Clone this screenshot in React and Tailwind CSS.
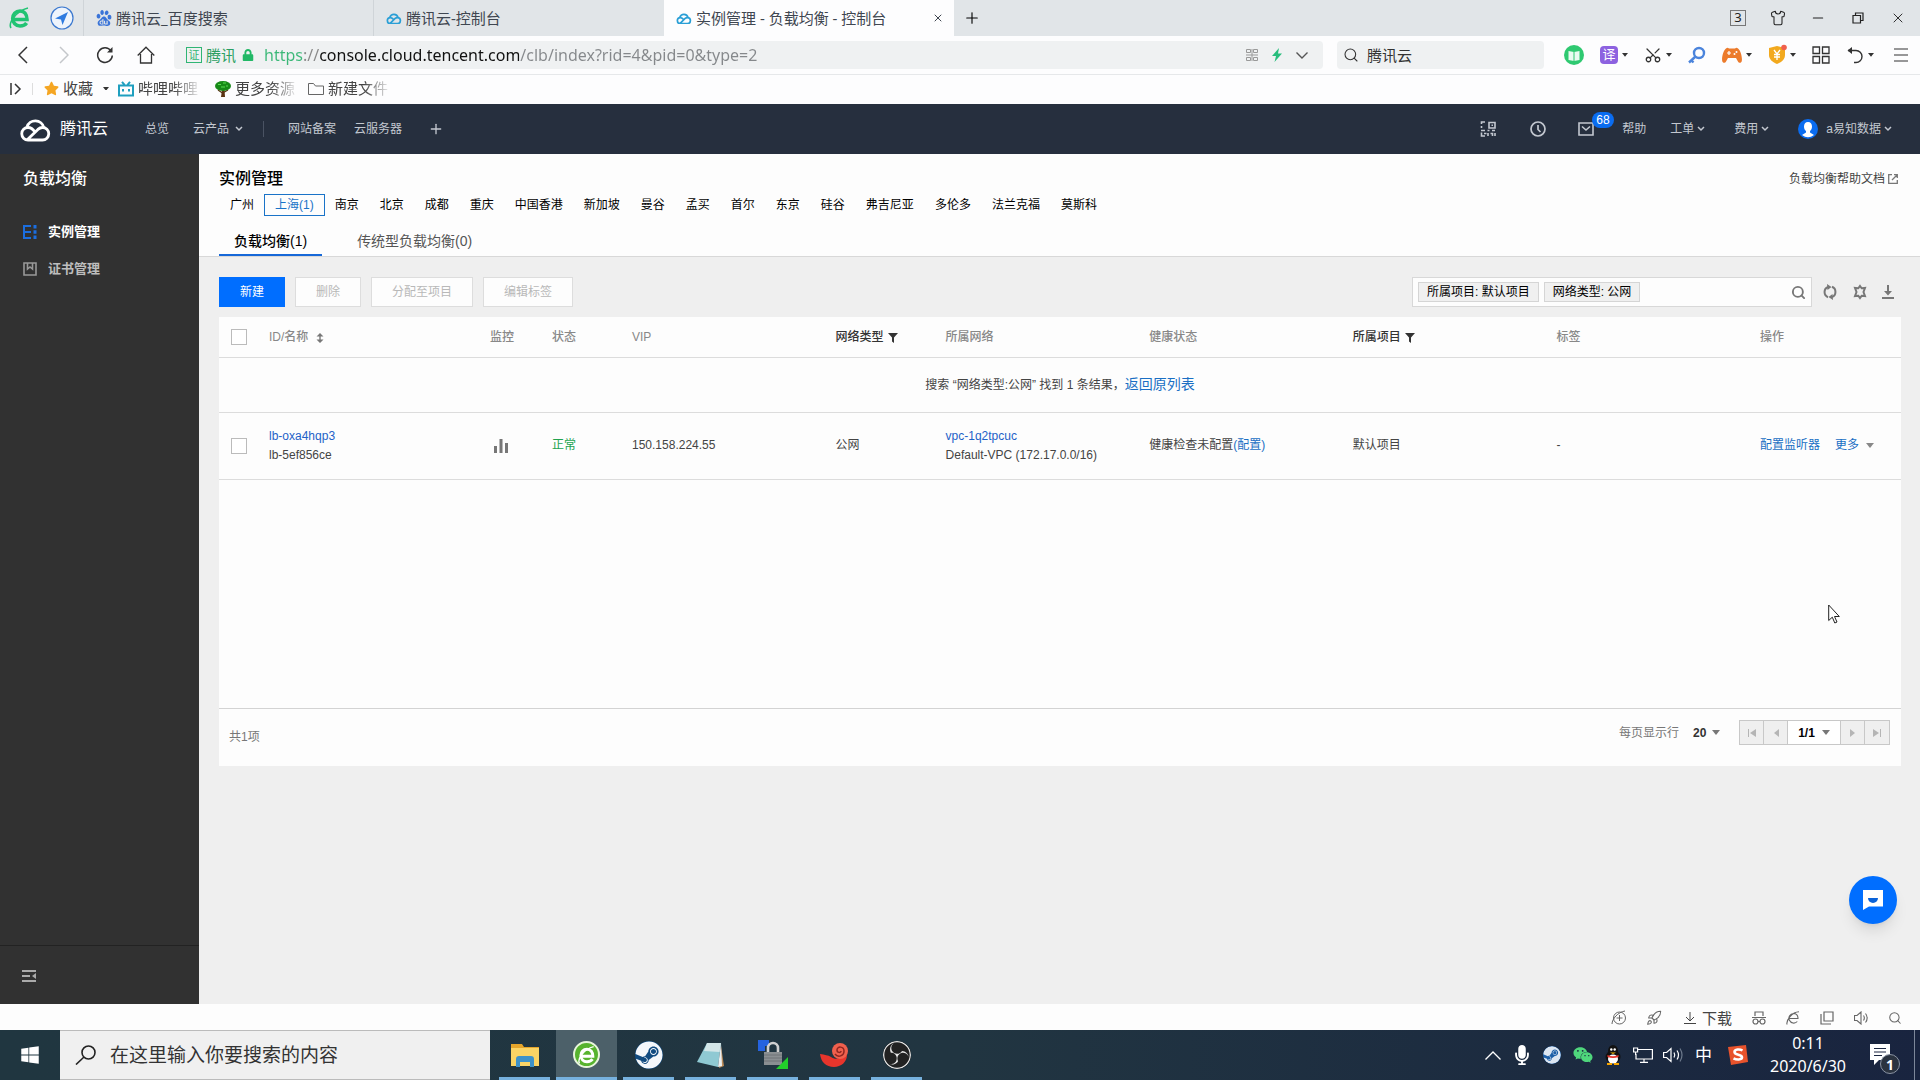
import { Scissors, Plus, X, Minus, Search, Shirt, Rocket } from "lucide-react";
import { FaSteam, FaWindows, FaWeixin, FaStar, FaLock, FaMicrophone } from "react-icons/fa";
import { SiBaidu, SiObsstudio } from "react-icons/si";

const regions = [
  "广州", "上海(1)", "南京", "北京", "成都", "重庆", "中国香港", "新加坡", "曼谷", "孟买",
  "首尔", "东京", "硅谷", "弗吉尼亚", "多伦多", "法兰克福", "莫斯科",
];

function CloudLogo({ className, stroke = "currentColor", width = 3 }) {
  return (
    <svg className={className} viewBox="0 0 33 26" fill="none" stroke={stroke} strokeWidth={width}>
      <path d="M16 16c-2-3-4-4.500-7-4.500a6.200 6.200 0 0 0 0 12.500h14.500a6.200 6.200 0 0 0 0-12.500c-2 0-3.400.8-4.600 1.900L8.500 23.500" />
      <path d="M8 11a8.700 8.700 0 0 1 16.800.5" />
    </svg>
  );
}

function EdgeE({ className, color }) {
  return (
    <svg className={className} viewBox="0 0 24 24" fill="none" stroke={color}>
      <path d="M5 13.500h14c0-5-2.600-8.500-7-8.500s-7.300 3.300-7.300 7.500S7.700 20 12 20c3 0 5.200-1 6.600-3" strokeWidth="3.600" />
      <path d="M3 22c-3-5 5-17 17-20" strokeWidth="1.600" />
    </svg>
  );
}

function Caret({ className = "w-1.5" }) {
  return (
    <svg className={className} viewBox="0 0 8 5" fill="currentColor">
      <path d="M0 0h8L4 5z" />
    </svg>
  );
}

function Chevron({ className = "w-2" }) {
  return (
    <svg className={className} viewBox="0 0 8 6" fill="none" stroke="currentColor" strokeWidth="1.500">
      <path d="M1 1l3 3 3-3" />
    </svg>
  );
}

function GridIcon({ className }) {
  return (
    <svg className={className} viewBox="0 0 18 18" fill="none" stroke="currentColor" strokeWidth="1.300">
      <path d="M1 1h6.500v6.500H1zM10.500 1H17v6.500h-6.500zM1 10.500h6.500V17H1zM10.500 10.500H17V17h-6.500z" />
    </svg>
  );
}

function TabStrip() {
  return (
    <div className="flex h-9 items-stretch bg-[#e1e5e8] text-[15px] text-[#3f4650]">
      <div className="flex w-10 items-center justify-center">
        <EdgeE className="h-6 w-6" color="#22c373" />
      </div>
      <div className="flex w-11 items-center justify-center border-r border-[#cfd4d8]">
        <svg className="h-6 w-6" viewBox="0 0 24 24">
          <circle cx="12" cy="12" r="11" fill="#eef4fc" stroke="#3b78cf" strokeWidth="1.200" />
          <path d="M18 6L5 12.500l6 1 1.500 5.500z" fill="#2f7be0" />
        </svg>
      </div>
      <button className="flex w-[290px] items-center gap-1 border-r border-[#cfd4d8] pl-3 text-left">
        <SiBaidu className="size-4 text-[#3a74d8]" />
        腾讯云_百度搜索
      </button>
      <button className="flex w-[290px] items-center gap-1 pl-3 text-left">
        <CloudLogo className="w-4" stroke="#2a9fd6" width={3.5} />
        腾讯云-控制台
      </button>
      <div className="flex w-[290px] items-center gap-1 bg-[#fdfdfe] pr-2.5 pl-3">
        <CloudLogo className="w-4" stroke="#2a9fd6" width={3.5} />
        <span className="flex-1">实例管理 - 负载均衡 - 控制台</span>
        <button aria-label="关闭标签页"><X className="size-3" strokeWidth={2} /></button>
      </div>
      <button className="flex w-9 items-center justify-center text-black" aria-label="新标签页">
        <Plus className="size-[18px]" strokeWidth={1.5} />
      </button>
      <div className="ml-auto flex items-stretch pr-0.5 text-[#222]">
        <button className="flex w-10 items-center justify-center">
          <span className="flex h-4 w-4 items-center justify-center border border-[#777] text-[13px]">3</span>
        </button>
        <button className="flex w-10 items-center justify-center" aria-label="皮肤"><Shirt className="size-4" strokeWidth={1.6} /></button>
        <button className="flex w-10 items-center justify-center" aria-label="最小化"><Minus className="size-4" strokeWidth={1.6} /></button>
        <button className="flex w-10 items-center justify-center" aria-label="还原">
          <svg className="size-3" viewBox="0 0 12 12" fill="none" stroke="currentColor" strokeWidth="1.200">
            <path d="M1 3.500h7.500V11H1zM3.500 3.500V1H11v7.500H8.500" />
          </svg>
        </button>
        <button className="flex w-10 items-center justify-center" aria-label="关闭"><X className="size-4" strokeWidth={1.4} /></button>
      </div>
    </div>
  );
}

function AddressRow() {
  return (
    <div className="flex h-[39px] items-center border-b border-[#e6e8ea] bg-[#fdfdfe] pr-3 text-[#333]">
      <div className="flex pl-0.5">
        <button className="flex w-[41px] justify-center" aria-label="后退">
          <svg className="h-[18px]" viewBox="0 0 10 18" fill="none" stroke="currentColor" strokeWidth="1.500"><path d="M9 1L1 9l8 8" /></svg>
        </button>
        <button className="flex w-[41px] justify-center text-[#c4c7ca]" aria-label="前进">
          <svg className="h-[18px]" viewBox="0 0 10 18" fill="none" stroke="currentColor" strokeWidth="1.500"><path d="M1 1l8 8-8 8" /></svg>
        </button>
        <button className="flex w-[41px] justify-center" aria-label="刷新">
          <svg className="size-[18px]" viewBox="0 0 18 18" fill="none" stroke="currentColor" strokeWidth="1.500">
            <path d="M15 5A7.300 7.300 0 1 0 16.300 9.500" />
            <path d="M16.500 1v5.500H11z" fill="currentColor" stroke="none" />
          </svg>
        </button>
        <button className="flex w-[41px] justify-center" aria-label="主页">
          <svg className="size-[18px]" viewBox="0 0 18 18" fill="none" stroke="currentColor" strokeWidth="1.300">
            <path d="M.7 9.500L9 1.200l8.300 8.300M3.500 8v9h11V8" />
          </svg>
        </button>
      </div>

      <div className="ml-2 flex h-7 flex-1 items-center rounded bg-[#eff1f2] pr-[15px] pl-3">
        <span className="flex h-4 w-4 items-center justify-center border border-[#2fb574] text-[11px] text-[#2fb574]">证</span>
        <span className="ml-1 text-[15px] text-[#2b9f63]">腾讯</span>
        <FaLock className="ml-1.5 size-3 text-[#22b866]" />
        <input
          aria-label="地址栏"
          defaultValue="https://console.cloud.tencent.com/clb/index?rid=4&pid=0&type=2"
          className="ml-2.5 min-w-0 flex-1 bg-[linear-gradient(90deg,#3bb878_39px,#888_39px,#888_55px,#111_55px,#111_255px,#85888b_255px)] bg-clip-text text-[16px] text-transparent outline-none"
        />
        <svg className="size-3 text-[#999]" viewBox="0 0 12 12" fill="none" stroke="currentColor">
          <path d="M.5.5h4v3h-4zM7.500.5h4v3h-4zM.5 8.500h4v3h-4zM7.500 8.500h4v3h-4zM0 6h12M6 0v12" />
        </svg>
        <svg className="ml-3.5 h-3.5 w-2.5" viewBox="0 0 10 14"><path d="M7 0L0 8h4l-1.500 6L10 5.500H6z" fill="#27bd7c" /></svg>
        <svg className="ml-3.5 w-3" viewBox="0 0 12 7" fill="none" stroke="#555" strokeWidth="1.400"><path d="M.5.5L6 6l5.500-5.500" /></svg>
      </div>

      <label className="ml-3.5 flex h-7 w-[207px] items-center gap-2 rounded bg-[#eff1f2] pl-1.5">
        <Search className="size-4" strokeWidth={1.6} />
        <input aria-label="搜索" defaultValue="腾讯云" className="w-40 text-[15px] outline-none" />
      </label>

      <div className="ml-5 flex items-center gap-4">
        <button aria-label="阅读">
          <svg className="size-5" viewBox="0 0 20 20">
            <circle cx="10" cy="10" r="10" fill="#2fc971" />
            <path d="M4.500 6l5.500 1 5.500-1v9L10 16l-5.500-1z" fill="#e9fbf1" />
            <path d="M10 7v9" stroke="#2fc971" />
          </svg>
        </button>
        <button className="flex items-center gap-1">
          <span className="flex size-[18px] items-center justify-center rounded-sm bg-[#8d62e0] text-[13px] text-white">译</span>
          <Caret />
        </button>
        <button className="flex items-center gap-1" aria-label="截图">
          <Scissors className="size-[18px] -rotate-90" strokeWidth={1.7} />
          <Caret />
        </button>
        <button aria-label="密码">
          <svg className="size-[18px]" viewBox="0 0 18 18" fill="none" stroke="#4b84dc" strokeWidth="2.400">
            <circle cx="11" cy="7" r="5" />
            <path d="M7.500 10.500L1 16.500M3 14l2.500 2.500" />
          </svg>
        </button>
        <button className="flex items-center gap-1" aria-label="游戏">
          <svg className="h-4 w-5" viewBox="0 0 20 16">
            <path d="M4 1.500q1.500-1.500 3 0h6q1.500-1.500 3 0c2.500 1.500 4.500 9 3.800 12.500-.5 2.500-3 2.200-4 .2L14 11H6l-1.800 3.200c-1 2-3.500 2.300-4-.2C-.5 10.500 1.500 3 4 1.500z" fill="#ec7b2c" />
            <path d="M7 4v4M5 6h4" stroke="#fff" strokeWidth="1.200" />
            <circle cx="12.500" cy="7" r="1" fill="#fff" />
            <circle cx="14.500" cy="5" r="1" fill="#fff" />
          </svg>
          <Caret />
        </button>
        <button className="flex items-center gap-1" aria-label="安全">
          <svg className="size-[18px] overflow-visible" viewBox="0 0 18 18">
            <path d="M9 0l8 2v7c0 4-3 7-8 9-5-2-8-5-8-9V2z" fill="#f2a91e" />
            <path d="M6 4l3 4 3-4M9 8v6M6 8.500h6M6 11h6" stroke="#fff" strokeWidth="1.300" fill="none" />
            <circle cx="16" cy="1.500" r="2.800" fill="#f0604d" />
          </svg>
          <Caret />
        </button>
        <button aria-label="扩展"><GridIcon className="size-[18px]" /></button>
        <button className="flex items-center gap-1" aria-label="恢复">
          <svg className="size-[18px]" viewBox="0 0 18 18" fill="none" stroke="currentColor" strokeWidth="1.400">
            <path d="M2 4.500h8a5.500 5.500 0 0 1 0 12H8" />
            <path d="M6 1L1.500 4.500 6 8z" fill="currentColor" stroke="none" />
          </svg>
          <Caret />
        </button>
        <button className="pl-1" aria-label="菜单">
          <svg className="size-3.5" viewBox="0 0 14 14" stroke="currentColor" strokeWidth="1.200"><path d="M0 1h14M0 7h14M0 13h14" /></svg>
        </button>
      </div>
    </div>
  );
}

function Bookmarks() {
  const fade = "[mask-image:linear-gradient(90deg,#000_60%,#0002)]";
  return (
    <div className="flex h-[29px] items-center bg-[#fdfdfe] pb-0.5 text-[15px] text-[#444]">
      <svg className="ml-2.5 h-3 w-3" viewBox="0 0 12 12" fill="none" stroke="#333" strokeWidth="1.500"><path d="M1 0v12M5 1l5 5-5 5" /></svg>
      <span className="ml-2.5 h-3 w-px bg-[#ddd]" />
      <a href="#fav" className="ml-[11px] flex items-center gap-1">
        <FaStar className="size-[15px] text-[#f5a623]" />收藏
      </a>
      <span className="ml-2.5 text-[#333]"><Caret /></span>
      <a href="#bilibili" className="ml-[9px] flex items-center gap-1">
        <svg className="size-4" viewBox="0 0 16 16" fill="none" stroke="#1f9fbf" strokeWidth="2">
          <path d="M1 4.500h14v10H1zM4 .8l2.500 3M12 .8l-2.500 3M5 8v2.500M11 8v2.500" />
        </svg>
        <span className={fade}>哔哩哔哩</span>
      </a>
      <a href="#more" className="ml-[17px] flex items-center gap-1">
        <svg className="h-4 w-4" viewBox="0 0 16 16">
          <path d="M7 9h2.500l.5 7H6z" fill="#5b3413" />
          <path d="M3 9L7.500 12 13 9" fill="none" stroke="#5b3413" strokeWidth="1.200" />
          <ellipse cx="8" cy="5" rx="8" ry="5" fill="#178a17" />
          <path d="M3 3.500h3M8 2h3M6 6h4M11 5h2" stroke="#56e04c" />
        </svg>
        <span className={fade}>更多资源</span>
      </a>
      <a href="#folder" className="ml-[13px] flex items-center gap-1">
        <svg className="h-4 w-4" viewBox="0 0 16 16" fill="none" stroke="#666"><path d="M.5 13.500v-11h5l2 2.500h8v8.500z" /></svg>
        <span className={fade}>新建文件</span>
      </a>
    </div>
  );
}

function ConsoleHeader() {
  return (
    <header className="flex h-[50px] items-center bg-[#262f3e] pr-7 pl-[19px] text-[12px] text-[#c3c8d0]">
      <CloudLogo className="w-[33px] text-white" width={2.8} />
      <span className="ml-2 text-[16px] text-white">腾讯云</span>
      <a href="#overview" className="ml-[37px]">总览</a>
      <button className="ml-6 flex items-center gap-1.5">云产品 <Chevron /></button>
      <span className="ml-5 h-4 w-px bg-[#4a5363]" />
      <a href="#beian" className="ml-6">网站备案</a>
      <a href="#cvm" className="ml-[18px]">云服务器</a>
      <button className="ml-[26px]" aria-label="添加"><Plus className="size-4" strokeWidth={2} /></button>

      <div className="ml-auto flex items-center">
        <button aria-label="小程序">
          <svg className="size-4" viewBox="0 0 16 16" fill="none" stroke="currentColor" strokeWidth="1.600">
            <path d="M5 1H1.500v2M1.500 5v2M9 1.500h6V7H9zM1 9.500h4M7.500 9.500h2M12 9.500h3M1.500 11.500V15H5M4 12.500h2.500M8 12v3M10.500 12.500h2V15M15 12v3" />
            <path d="M11.500 3.500h1.500v1.500h-1.500z" fill="currentColor" stroke="none" />
          </svg>
        </button>
        <button className="ml-[34px]" aria-label="历史">
          <svg className="size-4" viewBox="0 0 16 16" fill="none" stroke="currentColor" strokeWidth="1.700">
            <circle cx="8" cy="8" r="7" /><path d="M8 4v4.500l2.500 2.500" />
          </svg>
        </button>
        <button className="relative ml-8" aria-label="消息">
          <svg className="h-3.5 w-4" viewBox="0 0 16 14" fill="none" stroke="currentColor" strokeWidth="1.600"><path d="M1 1h14v12H1zM4 4.500L8 8l4-3.500" /></svg>
          <span className="absolute -top-2.5 left-3.5 rounded-full bg-[#0a6cf0] px-1 text-[12px] leading-4 text-white">68</span>
        </button>
        <a href="#help" className="ml-7">帮助</a>
        <button className="ml-6 flex items-center gap-[3px]">工单 <Chevron /></button>
        <button className="ml-[29px] flex items-center gap-[3px]">费用 <Chevron /></button>
        <button className="ml-[29px] flex items-center gap-2">
          <svg className="size-5" viewBox="0 0 20 20">
            <circle cx="10" cy="10" r="10" fill="#0a6cf0" />
            <path d="M10 3c2.600 0 4 2 4 4.500 0 2-.8 3.500-2 4.500v1.500l4 2.500a10 10 0 0 1-12 0l4-2.500V12c-1.200-1-2-2.500-2-4.500C6 5 7.400 3 10 3z" fill="#fff" />
          </svg>
          <span className="flex items-center gap-[3px]">a易知数据 <Chevron /></span>
        </button>
      </div>
    </header>
  );
}

function Sidebar() {
  return (
    <aside className="flex w-[199px] shrink-0 flex-col bg-[#313131]">
      <h2 className="flex h-[50px] items-center pl-[23px] text-[16px] font-medium text-white">负载均衡</h2>
      <nav className="pt-[9px] text-[13px] font-bold">
        <a href="#instances" className="flex h-[37px] items-center gap-[11px] pl-[23px] text-white">
          <svg className="size-3.5" viewBox="0 0 14 14" fill="none" stroke="#1b6ee0" strokeWidth="2">
            <path d="M8 1H1v12h7M1 7h7" />
            <path d="M10.500 0h3v3.500h-3zM10.500 5.200h3v3.500h-3zM10.500 10.500h3V14h-3z" fill="#1b6ee0" stroke="none" />
          </svg>
          实例管理
        </a>
        <a href="#certs" className="flex h-[37px] items-center gap-[11px] pl-[23px] text-[#bdbdbd]">
          <svg className="size-3.5" viewBox="0 0 14 14" fill="none" stroke="#999" strokeWidth="1.600">
            <path d="M1 1h12v12H1z" /><path d="M4.500 1v6L7 5l2.500 2V1" />
          </svg>
          证书管理
        </a>
      </nav>
      <div className="mt-auto flex h-[59px] items-center border-t border-[#222] pl-[22px] pt-0.5">
        <button aria-label="收起菜单">
          <svg className="h-3 w-3.5" viewBox="0 0 14 12" stroke="#aaa" strokeWidth="2">
            <path d="M0 1h14M0 6h8M0 11h14" /><path d="M14 3v6l-4-3z" fill="#aaa" stroke="none" />
          </svg>
        </button>
      </div>
    </aside>
  );
}

function Checkbox({ label }) {
  return <input type="checkbox" aria-label={label} className="ml-0.5 block size-4 appearance-none border border-[#bbb] bg-white" />;
}

function Filter() {
  return (
    <svg className="ml-1 inline h-2.5 w-2.5" viewBox="0 0 10 10" fill="#333"><path d="M0 0h10L6 4.500V10L4 8.500v-4z" /></svg>
  );
}

function InstanceTable() {
  return (
    <table className="w-full table-fixed text-left text-[12px] text-[#444]">
      <colgroup>
        <col className="w-10" />
        <col className="w-[221px]" />
        <col className="w-[62px]" />
        <col className="w-20" />
        <col />
        <col className="w-[110px]" />
        <col />
        <col />
        <col />
        <col />
        <col className="w-[151px]" />
      </colgroup>
      <thead>
        <tr className="h-10 border-b border-[#dcdcdc] text-[#888] [&>th]:px-2.5 [&>th]:font-medium">
          <th><Checkbox label="全选" /></th>
          <th>
            ID/名称
            <svg className="ml-2 inline h-2.5 w-2" viewBox="0 0 8 10" fill="#777"><path d="M4 0l3.500 3.500h-7zM4 10L.5 6.500h7zM3.300 3h1.400v4H3.300z" /></svg>
          </th>
          <th>监控</th>
          <th>状态</th>
          <th>VIP</th>
          <th className="text-[#333]">网络类型<Filter /></th>
          <th>所属网络</th>
          <th>健康状态</th>
          <th className="text-[#333]">所属项目<Filter /></th>
          <th>标签</th>
          <th>操作</th>
        </tr>
      </thead>
      <tbody>
        <tr className="h-[55px] border-b border-[#dcdcdc]">
          <td colSpan={11} className="text-center">
            搜索 “网络类型:公网” 找到 1 条结果，<a href="#all" className="text-[14px] text-[#1a6fc4]">返回原列表</a>
          </td>
        </tr>
        <tr className="h-[67px] border-b border-[#dcdcdc] leading-[19px] [&>td]:px-2.5">
          <td><Checkbox label="lb-oxa4hqp3" /></td>
          <td>
            <a href="#lb" className="block text-[#1e62c8]">lb-oxa4hqp3</a>
            lb-5ef856ce
          </td>
          <td>
            <button className="ml-1 block" aria-label="监控">
              <svg className="h-3.5 w-3.5" viewBox="0 0 14 14" fill="#777"><path d="M0 7h3v7H0zM5.500 0h3v14h-3zM11 4h3v10h-3z" /></svg>
            </button>
          </td>
          <td className="text-[#22a34f]">正常</td>
          <td>150.158.224.55</td>
          <td>公网</td>
          <td>
            <a href="#vpc" className="block text-[#1e62c8]">vpc-1q2tpcuc</a>
            Default-VPC (172.17.0.0/16)
          </td>
          <td>健康检查未配置<a href="#health" className="text-[#1a6fc4]">(配置)</a></td>
          <td>默认项目</td>
          <td>-</td>
          <td>
            <div className="flex items-center text-[#1a6fc4]">
              <a href="#listener">配置监听器</a>
              <button className="ml-[15px] flex items-center gap-[7px]">更多 <Caret className="w-2 text-[#888]" /></button>
            </div>
          </td>
        </tr>
      </tbody>
    </table>
  );
}

function Pager() {
  const cell = "flex w-6 items-center justify-center bg-[#efefef] text-[#b5b5b5]";
  return (
    <div className="flex h-[25px] divide-x divide-[#c8c8c8] border border-[#c8c8c8]">
      <button className={cell} aria-label="首页"><svg className="h-2 w-2" viewBox="0 0 8 8" fill="currentColor"><path d="M0 0h1v8H0zM8 0v8L2 4z" /></svg></button>
      <button className={cell} aria-label="上一页"><svg className="h-2 w-2" viewBox="0 0 8 8" fill="currentColor"><path d="M7 0v8L2 4z" /></svg></button>
      <button className="flex w-[53px] items-center justify-center gap-[7px] bg-white font-bold text-black">1/1 <Caret className="w-2 text-[#777]" /></button>
      <button className={cell} aria-label="下一页"><svg className="h-2 w-2" viewBox="0 0 8 8" fill="currentColor"><path d="M1 0v8l5-4z" /></svg></button>
      <button className={cell} aria-label="末页"><svg className="h-2 w-2" viewBox="0 0 8 8" fill="currentColor"><path d="M7 0h1v8H7zM0 0v8l6-4z" /></svg></button>
    </div>
  );
}

function Main() {
  const disabledBtn = "h-[30px] border border-[#ddd] bg-[#fdfdfd] text-[#b8b8b8]";
  return (
    <main className="relative min-w-0 flex-1 bg-[#efefef] text-[12px]">
      <div className="border-b border-[#d8d8d8] bg-[#fdfdfd] pt-[13px] pr-[18px] pl-5">
        <div className="flex h-6 items-center justify-between">
          <h1 className="text-[16px] font-medium text-black">实例管理</h1>
          <a href="#docs" className="flex items-center gap-[3px] pr-1 text-[#444]">
            负载均衡帮助文档
            <svg className="size-2.5" viewBox="0 0 10 10" fill="none" stroke="#777" strokeWidth="1.300"><path d="M4 .7H.7v8.600h8.600V6M6 .7h3.300V4M9.300.7L4 6" /></svg>
          </a>
        </div>
        <div className="mt-[3px] flex text-black">
          {regions.map((name, i) => (
            <button
              key={name}
              className={i === 1
                ? "-ml-px h-[22px] border border-[#1a73c8] px-2.5 text-[#1a73c8]"
                : i === 0 ? "h-[22px] border border-transparent px-2.5" : "-ml-px h-[22px] border border-transparent px-2.5"}
            >
              {name}
            </button>
          ))}
        </div>
        <div className="mt-3 flex gap-5 text-[14px]">
          <button className="h-7 border-b-2 border-[#1668d8] px-[15px] font-medium text-black">负载均衡(1)</button>
          <button className="h-7 border-b-2 border-transparent px-[15px] text-[#555]">传统型负载均衡(0)</button>
        </div>
      </div>

      <div className="pt-5 pr-[19px] pl-5">
        <div className="flex items-center gap-2.5">
          <button className="h-[30px] w-[66px] bg-[#006eff] text-white">新建</button>
          <button disabled className={`w-[66px] ${disabledBtn}`}>删除</button>
          <button disabled className={`w-[102px] ${disabledBtn}`}>分配至项目</button>
          <button disabled className={`w-[90px] ${disabledBtn}`}>编辑标签</button>

          <div className="ml-auto flex items-center pr-[7px]">
            <div className="flex h-[30px] w-[400px] items-center gap-[5px] border border-[#d8d8d8] bg-[#fdfdfd] px-[5px] text-black">
              <span className="h-5 border border-[#d5d5d5] bg-[#f0f0f0] px-2 leading-[18px]">所属项目: 默认项目</span>
              <span className="h-5 border border-[#d5d5d5] bg-[#f0f0f0] px-2 leading-[18px]">网络类型: 公网</span>
              <input aria-label="筛选" className="min-w-0 flex-1 outline-none" />
              <Search className="size-[15px] text-[#777]" strokeWidth={3} />
            </div>
            <button className="ml-2.5 text-[#777]" aria-label="刷新列表">
              <svg className="size-4" viewBox="0 0 16 16" fill="none" stroke="currentColor" strokeWidth="2">
                <path d="M6 13.200A5.500 5.500 0 0 1 6 3M10 2.800a5.500 5.500 0 0 1 0 10.200" />
                <path d="M5 0l4.500 3L5.500 6zM11 16l-4.500-3 4-3z" fill="currentColor" stroke="none" />
              </svg>
            </button>
            <button className="ml-3.5 text-[#777]" aria-label="设置">
              <svg className="size-4" viewBox="0 0 16 16" fill="none" stroke="currentColor" strokeWidth="2">
                <path d="M8 2l1.700 2.300 3.300-.3L11.500 8l1.500 4-3.300-.3L8 14l-1.700-2.300-3.300.3L4.500 8 3 4l3.300.3z" />
              </svg>
            </button>
            <button className="ml-3.5 text-[#777]" aria-label="下载列表">
              <svg className="h-3.5 w-3" viewBox="0 0 12 14" fill="currentColor"><path d="M5 0h2v6h3L6 10.500 2 6h3zM0 12h12v2H0z" /></svg>
            </button>
          </div>
        </div>

        <div className="mt-2.5 bg-[#fdfdfd]">
          <div className="min-h-[391px]">
            <InstanceTable />
          </div>
          <div className="flex h-[58px] justify-between border-t border-[#d3d3d3] pr-[11px] pl-2.5 text-[#777]">
            <span className="pt-[19px]">共1项</span>
            <div className="flex items-start pt-[11px]">
              <label className="flex h-[25px] items-center">
                每页显示行
                <select defaultValue="20" className="ml-3.5 w-4 appearance-none font-bold text-[#333] outline-none">
                  <option>20</option>
                </select>
                <Caret className="ml-[3px] w-2 text-[#777]" />
              </label>
              <div className="ml-[19px]"><Pager /></div>
            </div>
          </div>
        </div>
      </div>

      <button className="absolute right-[23px] bottom-20 flex size-12 items-center justify-center rounded-full bg-[#006eff] shadow-lg" aria-label="在线咨询">
        <svg className="size-5" viewBox="0 0 20 20"><path d="M0 0h20v16.500H6L0 20z" fill="#fff" /><path d="M5 8h10a5 5 0 0 1-10 0z" fill="#0a62d8" /></svg>
      </button>
      <svg className="absolute right-20 bottom-[380px] h-5 w-3" viewBox="0 0 12 20" fill="#fff" stroke="#222">
        <path d="M.7 1v15.500l3.600-3.300 2.500 5.800 2.200-1-2.500-5.500h4.800z" />
      </svg>
    </main>
  );
}

function StatusBar() {
  return (
    <div className="flex h-[26px] items-center justify-end bg-[#fdfdfd] pt-0.5 pr-[18px] text-[#666]">
      <svg className="size-4" viewBox="0 0 16 16" fill="none" stroke="currentColor"><circle cx="8.500" cy="8" r="6" /><path d="M5.500 8h6M8.500 5v6M1 14C1 9 7 2 14 1" /></svg>
      <Rocket className="ml-[19px] size-4" strokeWidth={1.6} />
      <button className="ml-[22px] flex items-center gap-1.5 text-[15px] leading-5 text-[#444]">
        <svg className="size-3" viewBox="0 0 12 12" fill="none" stroke="currentColor"><path d="M6 0v9M2 5l4 4 4-4M0 11.500h12" /></svg>
        下载
      </button>
      <svg className="ml-5 size-3.5" viewBox="0 0 14 14" fill="none" stroke="currentColor" strokeWidth="1.200"><path d="M3 5V1h8v4M0 6.500h14M6 10.500h2" /><circle cx="3.500" cy="10.500" r="2.500" /><circle cx="10.500" cy="10.500" r="2.500" /></svg>
      <svg className="ml-5 size-3.5" viewBox="0 0 14 14" fill="none" stroke="currentColor" strokeWidth="1.100"><path d="M3 7.500h9C12 4 10 2.500 7.500 2.500a4.800 4.800 0 1 0 3.800 8M1 13.500C0 9 6 1 13 .7" /></svg>
      <svg className="ml-5 size-3.5" viewBox="0 0 14 14" fill="none" stroke="currentColor" strokeWidth="1.200"><path d="M4 1h9v9H4zM1 3v10h10" /></svg>
      <svg className="ml-5 size-3.5" viewBox="0 0 14 14" fill="none" stroke="currentColor" strokeWidth="1.100"><path d="M.5 4.500h2.500l4-3.500v12L3 9.500H.5zM9.500 4.500c1 1.500 1 3.500 0 5M11.500 2.500c2.200 2.500 2.200 6.500 0 9" /></svg>
      <Search className="ml-5 size-3.5" strokeWidth={1.8} />
    </div>
  );
}

function FolderIcon() {
  return (
    <svg className="h-6 w-7" viewBox="0 0 28 24">
      <path d="M0 1h11l2 3h15v19H0z" fill="#e5a52b" />
      <path d="M0 5h28v18H0z" fill="#fbd465" />
      <path d="M5 24v-8q0-3 3-3h12q3 0 3 3v8h-4v-5H9v5z" fill="#3f92c9" />
    </svg>
  );
}

function NotepadIcon() {
  return (
    <svg className="h-[26px] w-7" viewBox="0 0 28 26">
      <path d="M24 4l3 20-5 2z" fill="#b98a58" />
      <path d="M10 1h14l-3 24L0 20z" fill="#8fc9d3" />
      <path d="M10 1h14l-1.500 9L7 9z" fill="#d3e6e8" />
      <path d="M24 1l1 23-4 1z" fill="#e9eef0" />
    </svg>
  );
}

function LockIcon() {
  return (
    <svg className="h-[29px] w-[30px]" viewBox="0 0 30 29">
      <path d="M0 0h11v6H7v5H0z" fill="#2563e0" />
      <path d="M10 13V8a5 5 0 0 1 10 0v5" fill="none" stroke="#d0d0d0" strokeWidth="2.600" />
      <path d="M6 12h18v13H6z" fill="#8a8f92" />
      <path d="M6 15h18M6 18h18M6 21h18" stroke="#6e7376" />
      <path d="M30 17v12H18z" fill="#22d02a" />
    </svg>
  );
}

function SnailIcon() {
  return (
    <svg className="h-[26px] w-[30px]" viewBox="0 0 30 26">
      <path d="M0 12c5 1 8 1 11 3 4 3 9 2 11-1l5-1c0 7-6 12-13 12C6 25 1 20 0 12z" fill="#e8352c" />
      <circle cx="20" cy="9" r="8" fill="#f0604d" />
      <path d="M15 12c3 4 9 2 9-3s-7-5-7-1c0 3 4 3 4 1" fill="none" stroke="#8f2520" strokeWidth="1.500" />
    </svg>
  );
}

function Taskbar() {
  const apps = [
    { name: "资源管理器", icon: <FolderIcon /> },
    { name: "浏览器", active: true, icon: (
      <span className="flex size-[27px] items-center justify-center rounded-full border-2 border-[#e8f5dc] bg-[#57b32e]">
        <EdgeE className="size-5" color="#fff" />
      </span>
    ) },
    { name: "Steam", icon: <FaSteam className="size-7 rounded-full bg-[#114b80] text-[#f4f7fa]" /> },
    { name: "记事本", icon: <NotepadIcon /> },
    { name: "远程", icon: <LockIcon /> },
    { name: "Xshell", icon: <SnailIcon /> },
    { name: "OBS", icon: <SiObsstudio className="size-7 rounded-full bg-[#222] text-[#e6e6e6]" /> },
  ];
  return (
    <footer className="flex h-[50px] items-stretch bg-linear-to-r from-[#203640] via-[#213541] to-[#19243f] text-white">
      <button className="flex w-[60px] items-center justify-center" aria-label="开始"><FaWindows className="size-5" /></button>
      <label className="flex w-[430px] items-center border-y border-[#bbb] bg-[#f0f0f0] pl-[15px] text-[#222]">
        <svg className="h-5 w-[21px]" viewBox="0 0 21 20" fill="none" stroke="currentColor" strokeWidth="1.600">
          <circle cx="13.500" cy="7.500" r="6.500" /><path d="M9 12L1 19.500" />
        </svg>
        <input
          aria-label="任务栏搜索"
          placeholder="在这里输入你要搜索的内容"
          className="ml-3.5 flex-1 text-[19px] placeholder-[#333] outline-none"
        />
      </label>
      <div className="flex items-stretch gap-px pl-1">
        {apps.map((app) => (
          <button
            key={app.name}
            aria-label={app.name}
            className={app.active
              ? "flex w-[61px] flex-col items-center bg-[#4c6069]"
              : "flex w-[61px] flex-col items-center px-[5px]"}
          >
            <span className="flex flex-1 items-center pt-0.5">{app.icon}</span>
            <span className="h-[3px] w-full bg-[#76b1de]" />
          </button>
        ))}
      </div>

      <div className="ml-auto flex items-center">
        <svg className="w-4" viewBox="0 0 16 9" fill="none" stroke="currentColor" strokeWidth="1.300"><path d="M.5 8.500L8 1l7.500 7.500" /></svg>
        <FaMicrophone className="ml-3 h-5 w-[18px]" />
        <FaSteam className="ml-3 size-[18px] rounded-full bg-[#1c5fa8] text-[#dce6f2]" />
        <FaWeixin className="ml-3 size-5 text-[#4fd67c]" />
        <svg className="ml-3 h-5 w-4" viewBox="0 0 16 20">
          <ellipse cx="8" cy="12" rx="7.500" ry="6.500" fill="#111" />
          <ellipse cx="8" cy="6" rx="5" ry="6" fill="#111" />
          <ellipse cx="8" cy="14" rx="5" ry="4.500" fill="#fff" />
          <circle cx="6.300" cy="4.500" r="1.200" fill="#fff" />
          <circle cx="9.700" cy="4.500" r="1.200" fill="#fff" />
          <path d="M5 7.500h6L8 9z" fill="#f7b500" />
          <path d="M2.500 10q5.500 2.500 11 0v2q-5.500 2-11 0z" fill="#e8352c" />
          <path d="M2 18h5v2H2zM9 18h5v2H9z" fill="#f7a500" />
        </svg>
        <svg className="ml-3 h-4 w-5" viewBox="0 0 20 16" fill="none" stroke="currentColor" strokeWidth="1.200"><path d="M5 2.500h14.400v9.500H3V7M11 12v3M7 15.400h8M.6 1h4v4h-4zM2.600 5v3" /></svg>
        <svg className="ml-2.5 h-4 w-5" viewBox="0 0 20 16" fill="none" stroke="currentColor" strokeWidth="1.200"><path d="M.6 5.500h3L8 1.500v13L3.600 10.500h-3zM11 5.500q1.500 2.500 0 5M14 3.500q3 4.500 0 9" /><path d="M17 1.500q4 6.500 0 13" stroke="#6d7a8c" /></svg>
        <span className="ml-3 text-[17px]">中</span>
        <svg className="ml-4 size-5" viewBox="0 0 20 20"><path d="M0 2l18-2 2 17-17 3z" fill="#e8532c" /><path d="M14.500 5.500C12 4 6.500 4 6.500 7c0 3.500 7.500 2 7.500 5.300 0 2.700-5.500 2.700-8.500 1" fill="none" stroke="#fff" strokeWidth="2.600" /></svg>
        <div className="ml-[22px] text-center text-[16px] leading-[23px]">
          <div>0:11</div>
          <div>2020/6/30</div>
        </div>
        <button className="relative mr-6 ml-6" aria-label="通知">
          <svg className="h-[22px] w-5" viewBox="0 0 20 22"><path d="M0 0h20v16H9l-5 5v-5H0z" fill="#fff" /><path d="M4 4.500h12M4 8h12M4 11.500h8" stroke="#1a2540" strokeWidth="1.200" /></svg>
          <span className="absolute top-2.5 left-2.5 flex size-5 items-center justify-center rounded-full border border-[#8a93a3] bg-[#2b3340] text-[14px] font-bold">1</span>
        </button>
        <span className="mr-[5px] h-full w-px bg-[#7d8799]" />
      </div>
    </footer>
  );
}

export default function App() {
  return (
    <div lang="zh-CN" className="flex min-h-screen flex-col font-['Liberation_Sans','Noto_Sans_CJK_SC',sans-serif]">
      <div className="font-['Noto_Sans','Noto_Sans_CJK_SC',sans-serif]">
        <TabStrip />
        <AddressRow />
        <Bookmarks />
      </div>
      <ConsoleHeader />
      <div className="flex flex-1">
        <Sidebar />
        <Main />
      </div>
      <div className="font-['Noto_Sans','Noto_Sans_CJK_SC',sans-serif]">
        <StatusBar />
        <Taskbar />
      </div>
    </div>
  );
}
